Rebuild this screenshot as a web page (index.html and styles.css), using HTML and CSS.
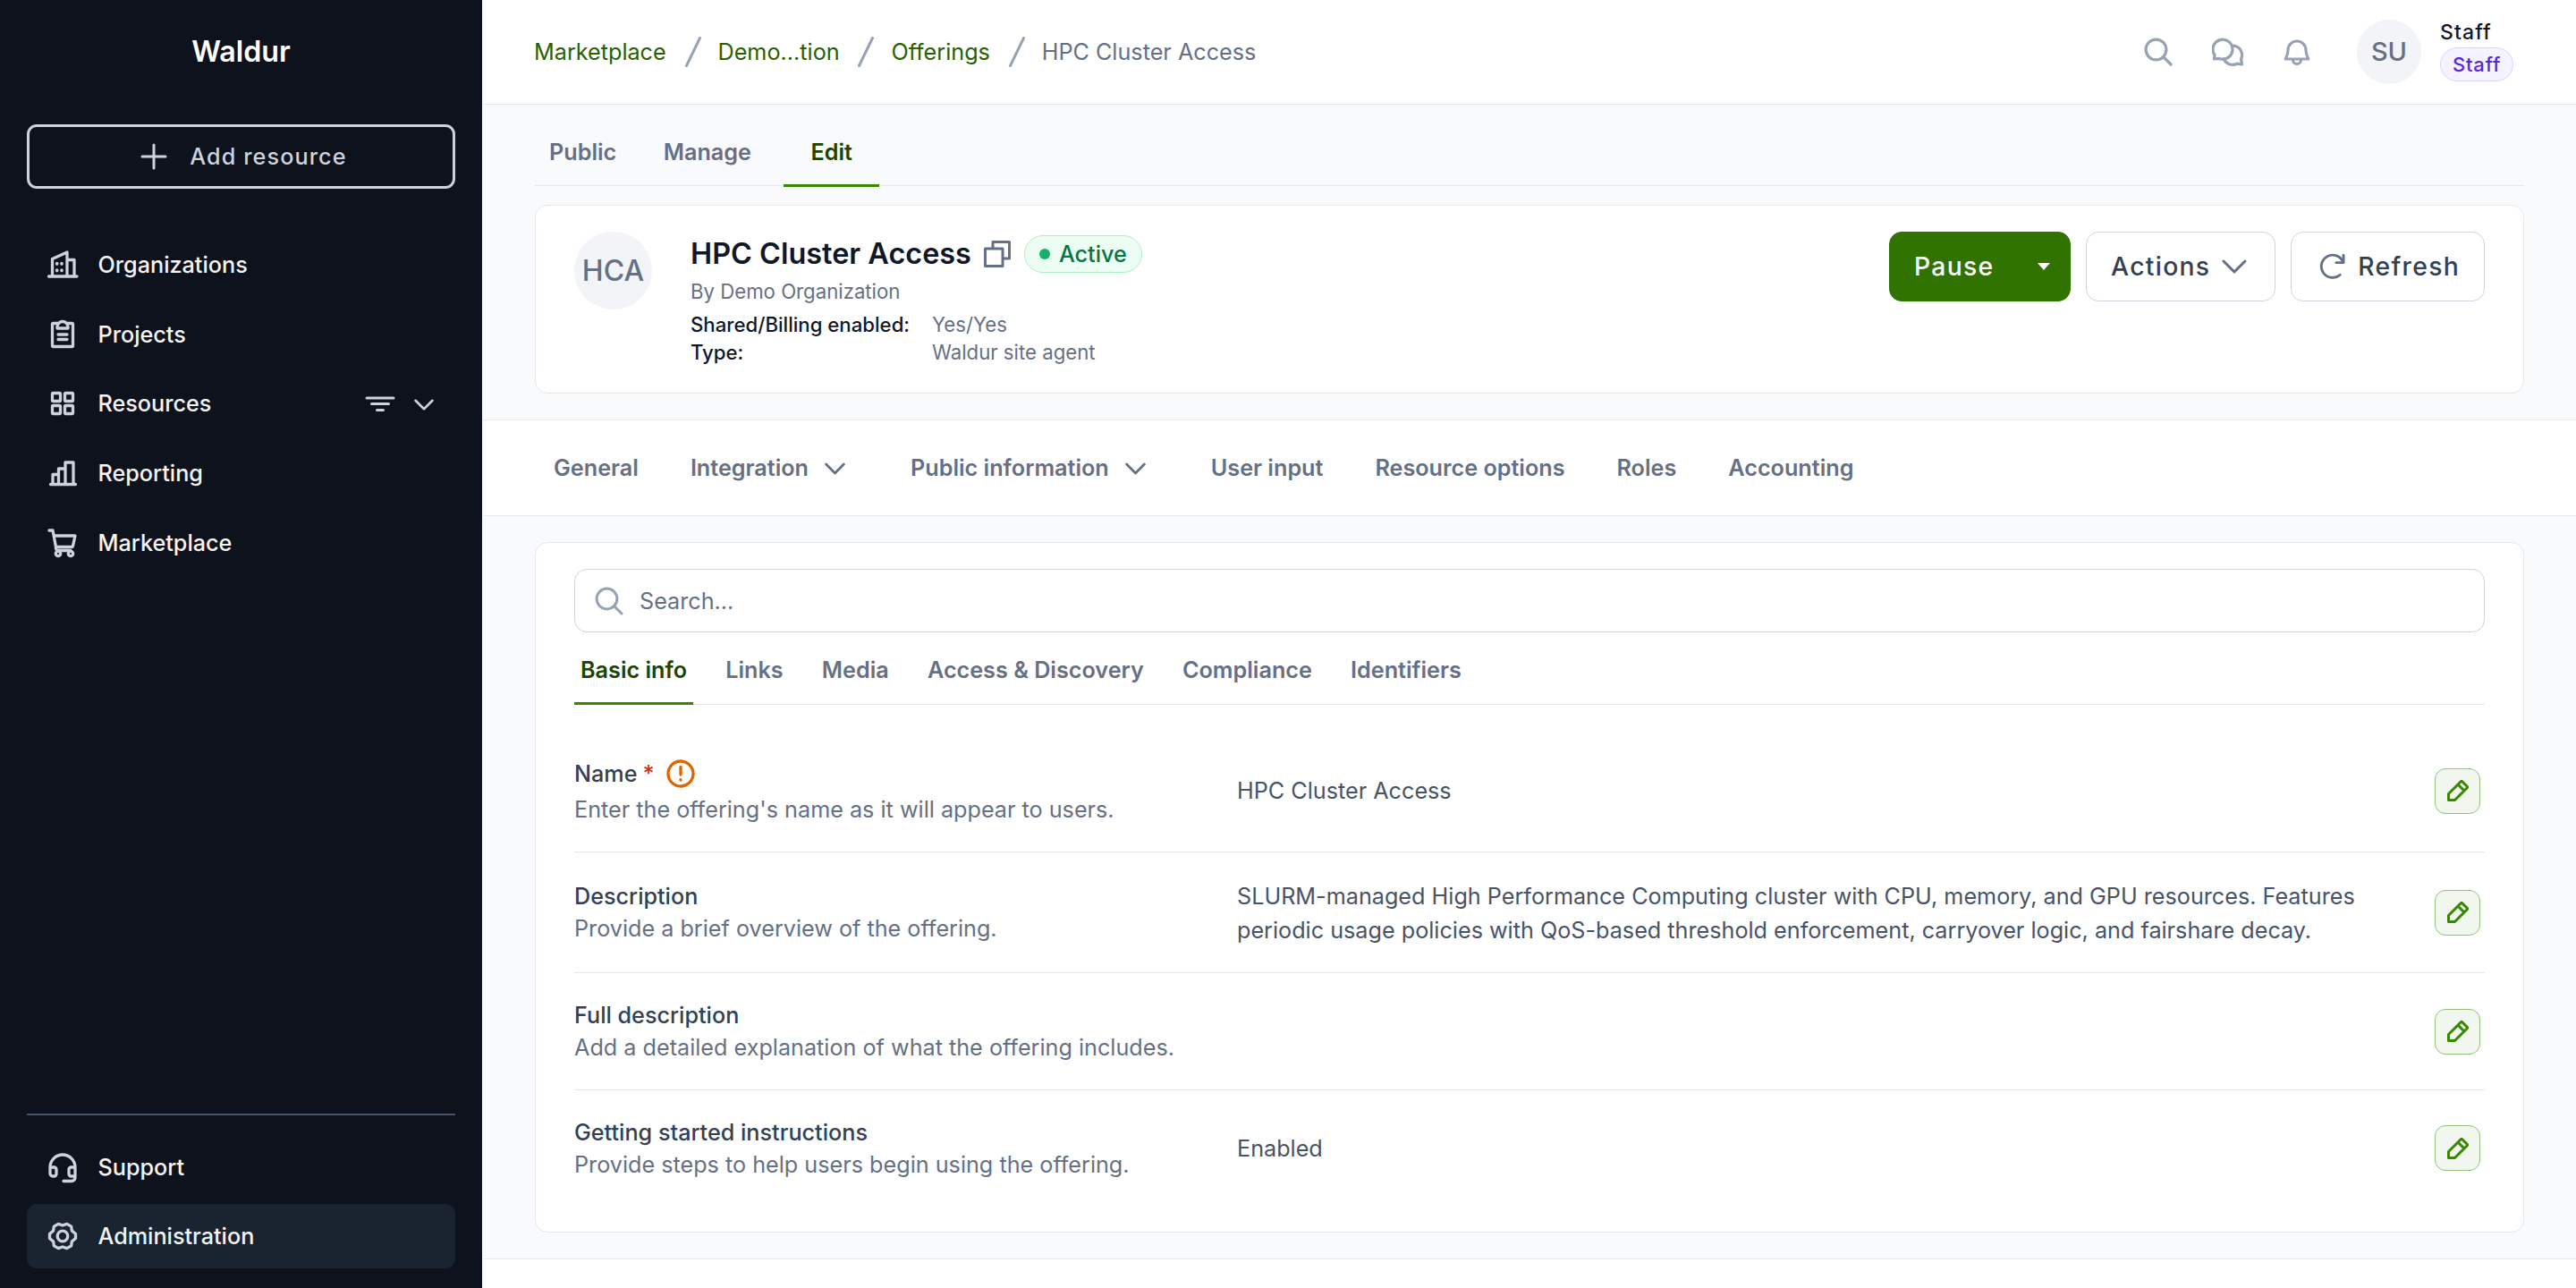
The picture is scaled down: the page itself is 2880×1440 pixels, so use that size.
FILE: index.html
```html
<!DOCTYPE html>
<html lang="en">
<head>
    <meta charset="UTF-8">
    <meta name="viewport" content="width=device-width, initial-scale=1.0">
    <title>HPC Cluster Access | Waldur</title>
    <link rel="stylesheet" href="styles.css">
</head>
<body>
    <!-- shared icons -->
    <svg class="sprite">
        <symbol id="chevron" viewBox="0 0 28 16"><path d="M2 2l12 12L26 2"/></symbol>
        <symbol id="search" viewBox="0 0 32 32"><circle cx="13.5" cy="13.5" r="11.4"/><path d="M21.700 21.700l8.300 8.300"/></symbol>
        <symbol id="pencil" viewBox="0 0 26 26"><path d="M2.5 16.5v7h7L23.3 9.7a1 1 0 0 0 0-1.4l-5.6-5.6a1 1 0 0 0-1.4 0zM13 6l7 7"/></symbol>
    </svg>

    <div class="app">
        <aside class="sidebar">
            <div class="logo">Waldur</div>
            <button class="add-resource">
                <svg width="30" height="30" viewBox="0 0 30 30"><path d="M2 15h26M15 2v26"/></svg>
                <span>Add resource</span>
            </button>
            <nav class="side-nav">
                <a class="side-item">
                    <svg viewBox="0 0 36 36"><path d="M2.500 31h31.500M6.500 31V11.500L23 4v27M23 12.500h8V31"/><path class="dots" d="M11.700 16.500v.6M17 16.500v.6M11.700 24v.6M17 24v.6"/></svg>
                    <span>Organizations</span>
                </a>
                <a class="side-item">
                    <svg viewBox="0 0 36 36"><path d="M12.500 5.500H7.500a1 1 0 0 0-1 1v24a1 1 0 0 0 1 1h21a1 1 0 0 0 1-1v-24a1 1 0 0 0-1-1h-5M12 11V9.500a6 6 0 0 1 12 0V11zM13 18h10M13 23.500h10"/></svg>
                    <span>Projects</span>
                </a>
                <a class="side-item">
                    <svg viewBox="0 0 36 36"><rect x="6.500" y="6.500" width="9" height="9" rx="1"/><rect x="20.500" y="6.500" width="9" height="9" rx="1"/><rect x="6.500" y="20.500" width="9" height="9" rx="1"/><rect x="20.500" y="20.500" width="9" height="9" rx="1"/></svg>
                    <span>Resources</span>
                    <span class="side-tools">
                        <svg class="filter" viewBox="0 0 34 18"><path d="M2 2h30M7.500 8.500h19M13.500 15.500h7"/></svg>
                        <svg class="chev"><use href="#chevron"/></svg>
                    </span>
                </a>
                <a class="side-item">
                    <svg viewBox="0 0 36 36"><path d="M4.500 30.500h28M7 30V19.500h6.500M13.500 30V13h7.500M21 30V6h9v24"/></svg>
                    <span>Reporting</span>
                </a>
                <a class="side-item">
                    <svg viewBox="0 0 36 36"><path d="M3 4h4l3.500 18.500h17.500a1.500 1.500 0 0 0 1.500-1.200L32 10H8.300M10.500 22.500a3 3 0 0 0 2.500 4h14"/><circle cx="13" cy="30" r="2.700"/><circle cx="27" cy="30" r="2.700"/></svg>
                    <span>Marketplace</span>
                </a>
            </nav>
            <nav class="side-bottom">
                <a class="side-item">
                    <svg viewBox="0 0 36 36"><path d="M32 18h-4.500a2.500 2.500 0 0 0-2.500 2.500v5a2.500 2.500 0 0 0 2.500 2.500H32zM32 18A14 14 0 0 0 4 18h4.500a2.500 2.500 0 0 1 2.500 2.500v5A2.500 2.500 0 0 1 8.500 28H7a3 3 0 0 1-3-3v-7M32 26v3.500a4 4 0 0 1-4 4h-9"/></svg>
                    <span>Support</span>
                </a>
                <a class="side-item current">
                    <svg viewBox="0 0 36 36"><path d="M32.500 15.500v5L28.400 24l-.8 4.900-4.800 2.700L18 30l-4.800 1.600-4.800-2.700L7.600 24l-4.100-3.500v-5L7.600 12l.8-4.900 4.800-2.700L18 6l4.800-1.600 4.800 2.700.8 4.900z"/><circle cx="18" cy="18" r="5.800"/></svg>
                    <span>Administration</span>
                </a>
            </nav>
        </aside>

        <main class="main">
            <header class="header">
                <div class="breadcrumb">
                    <a>Marketplace</a>
                    <svg class="slash" viewBox="0 0 18 34"><path d="M16.500 1.500l-15 31"/></svg>
                    <a>Demo...tion</a>
                    <svg class="slash" viewBox="0 0 18 34"><path d="M16.500 1.500l-15 31"/></svg>
                    <a>Offerings</a>
                    <svg class="slash" viewBox="0 0 18 34"><path d="M16.500 1.500l-15 31"/></svg>
                    <span>HPC Cluster Access</span>
                </div>
                <div class="header-tools">
                    <svg width="32" height="32"><use href="#search"/></svg>
                    <svg width="36" height="32" viewBox="0 0 36 32"><path d="M3 19.500A11 11 0 1 1 8 23.400L2.500 24zM24.500 9.200A10.500 10.500 0 0 1 32.600 24l.9 6-5.500-.8a11 11 0 0 1-15-5.500"/></svg>
                    <svg width="30" height="32" viewBox="0 0 30 32"><path d="M5 14a10 10 0 0 1 20 0c0 4 1.200 7 2.800 10H2.200C3.800 21 5 18 5 14zM10.500 25a4.500 4.500 0 0 0 9 0"/></svg>
                </div>
                <div class="avatar user-avatar">SU</div>
                <div class="user">
                    <span class="user-name">Staff</span>
                    <span class="user-role">Staff</span>
                </div>
            </header>

            <section class="hero">
                <div class="tabs">
                    <a class="tab">Public</a>
                    <a class="tab">Manage</a>
                    <a class="tab active">Edit</a>
                </div>
                <div class="offering card">
                    <div class="avatar">HCA</div>
                    <div class="offering-info">
                        <div class="title-row">
                            <h1>HPC Cluster Access</h1>
                            <svg class="copy" viewBox="0 0 30 30"><path d="M10 9V1.500h18.500V20H21M1.500 9H21v19.500H1.500z"/></svg>
                            <span class="badge"><i></i>Active</span>
                        </div>
                        <div class="by">By Demo Organization</div>
                        <dl class="meta">
                            <dt>Shared/Billing enabled:</dt><dd>Yes/Yes</dd>
                            <dt>Type:</dt><dd>Waldur site agent</dd>
                        </dl>
                    </div>
                    <div class="actions">
                        <button class="btn btn-pause">Pause<i class="caret"></i></button>
                        <button class="btn btn-actions">Actions <svg width="28" height="16"><use href="#chevron"/></svg></button>
                        <button class="btn btn-refresh"><svg width="31" height="31" viewBox="0 0 32 32"><path d="M30 2.500V11h-8.500M29.500 10.500A13 13 0 1 0 26 25"/></svg> Refresh</button>
                    </div>
                </div>
            </section>

            <nav class="menu">
                <a>General</a>
                <a>Integration <svg><use href="#chevron"/></svg></a>
                <a>Public information <svg><use href="#chevron"/></svg></a>
                <a>User input</a>
                <a>Resource options</a>
                <a>Roles</a>
                <a>Accounting</a>
            </nav>

            <section class="content">
                <div class="card settings">
                    <div class="search">
                        <svg width="32" height="32"><use href="#search"/></svg>
                        <span>Search...</span>
                    </div>
                    <div class="subtabs">
                        <a class="active">Basic info</a>
                        <a>Links</a>
                        <a>Media</a>
                        <a>Access &amp; Discovery</a>
                        <a>Compliance</a>
                        <a>Identifiers</a>
                    </div>
                    <div class="rows">
                        <div class="row row-name">
                            <div class="field">
                                <div class="label">Name <b>*</b>
                                    <svg class="alert" viewBox="0 0 32 32"><circle cx="16" cy="16" r="14"/><path d="M16 8.500v8.500M16 22.700v.3"/></svg>
                                </div>
                                <div class="hint">Enter the offering's name as it will appear to users.</div>
                            </div>
                            <div class="value">HPC Cluster Access</div>
                            <button class="edit"><svg><use href="#pencil"/></svg></button>
                        </div>
                        <div class="row row-desc">
                            <div class="field">
                                <div class="label">Description</div>
                                <div class="hint">Provide a brief overview of the offering.</div>
                            </div>
                            <div class="value">SLURM-managed High Performance Computing cluster with CPU, memory, and GPU resources. Features<br>periodic usage policies with QoS-based threshold enforcement, carryover logic, and fairshare decay.</div>
                            <button class="edit"><svg><use href="#pencil"/></svg></button>
                        </div>
                        <div class="row">
                            <div class="field">
                                <div class="label">Full description</div>
                                <div class="hint">Add a detailed explanation of what the offering includes.</div>
                            </div>
                            <div class="value"></div>
                            <button class="edit"><svg><use href="#pencil"/></svg></button>
                        </div>
                        <div class="row">
                            <div class="field">
                                <div class="label">Getting started instructions</div>
                                <div class="hint">Provide steps to help users begin using the offering.</div>
                            </div>
                            <div class="value">Enabled</div>
                            <button class="edit"><svg><use href="#pencil"/></svg></button>
                        </div>
                    </div>
                </div>
            </section>
            <footer class="footer"></footer>
        </main>
    </div>
</body>
</html>
```

FILE: styles.css
```css
* {
    box-sizing: border-box;
}
body {
    margin: 0;
    font-family: Inter, "Liberation Sans", sans-serif;
    font-optical-sizing: none;
    font-size: 25.2px;
    line-height: 36px;
    color: #101828;
    background: #f9fafc;
}
button {
    font: inherit;
    cursor: pointer;
}
svg {
    display: block;
    flex: none;
    fill: none;
    stroke: currentColor;
    stroke-width: 3;
    stroke-linecap: round;
    stroke-linejoin: round;
}
.sprite {
    position: absolute;
    width: 0;
    height: 0;
}
.app {
    display: flex;
    width: 2880px;
    height: 1440px;
    overflow: hidden;
}

/* sidebar */
.sidebar {
    display: flex;
    flex-direction: column;
    flex: none;
    width: 540px;
    padding: 0 30px 22px 30px;
    background: #0d121c;
    border-right: 1px solid #fff;
}
.logo {
    height: 139px;
    padding-top: 40px;
    font-size: 32.2px;
    font-weight: 600;
    text-align: center;
    color: #fff;
}
.add-resource {
    display: flex;
    align-items: center;
    justify-content: center;
    gap: 25px;
    height: 72px;
    padding: 0 0 0 6px;
    border: 3px solid #ced2dc;
    border-radius: 11px;
    background: none;
    color: #ced2dc;
    font-weight: 500;
    letter-spacing: 1.1px;
}
.side-nav {
    display: flex;
    flex-direction: column;
    gap: 5.7px;
    margin-top: 49px;
}
.side-item {
    display: flex;
    align-items: center;
    gap: 21.5px;
    height: 72px;
    padding: 0 22px;
    border-radius: 11px;
    color: #f5f5f6;
    font-weight: 500;
}
.side-item svg {
    width: 36px;
    height: 36px;
    color: #ced2dc;
    stroke-width: 3.3;
}
.side-item .dots {
    stroke-width: 3.6;
}
.side-tools {
    display: flex;
    align-items: center;
    gap: 21px;
    margin-left: auto;
    padding-top: 2px;
    padding-right: 2px;
}
.side-item .filter {
    width: 34px;
    height: 18px;
    stroke-width: 3;
}
.side-item .chev {
    width: 22px;
    height: 13px;
}
.side-bottom {
    display: flex;
    flex-direction: column;
    gap: 4.7px;
    margin-top: auto;
    padding-top: 22.3px;
    border-top: 2px solid #475467;
}
.side-item.current {
    background: #1a2330;
}

/* header */
.main {
    display: flex;
    flex-direction: column;
    flex: 1;
}
.header {
    display: flex;
    align-items: center;
    height: 117px;
    padding: 0 70px 0 57px;
    background: #fff;
    border-bottom: 1px solid #e4e7ec;
}
.breadcrumb {
    display: flex;
    align-items: center;
    color: #667085;
}
.breadcrumb a {
    color: #286100;
}
.slash {
    width: 18px;
    height: 34px;
    margin: 0 19px 0 20.8px;
    color: #98a2b3;
}
.header-tools {
    display: flex;
    align-items: center;
    gap: 44px;
    margin-left: auto;
    margin-right: 52px;
    color: #98a2b3;
}
.header-tools svg {
    stroke-width: 3.2;
}
.avatar {
    display: flex;
    align-items: center;
    justify-content: center;
    flex: none;
    width: 87px;
    height: 87px;
    border-radius: 50%;
    background: #f2f4f7;
    color: #667085;
    font-size: 32px;
    font-weight: 500;
}
.user-avatar {
    width: 72px;
    height: 72px;
    font-size: 29px;
}
.user {
    display: flex;
    flex-direction: column;
    align-items: flex-start;
    width: 82px;
    margin-left: 21px;
    padding-bottom: 7px;
    font-size: 23px;
    font-weight: 500;
    line-height: 34px;
    letter-spacing: 1.1px;
}
.user-role {
    width: 82px;
    border: 1px solid #d9d6fe;
    border-radius: 20px;
    background: #f4f3ff;
    color: #5925dc;
    font-size: 22px;
    line-height: 36px;
    letter-spacing: .8px;
    text-align: center;
}

/* offering card */
.hero {
    height: 352px;
    padding: 0 58px 0 58px;
}
.tabs {
    display: flex;
    height: 91px;
    border-bottom: 1px solid #e4e7ec;
}
.tab {
    height: 92px;
    padding: 35px 16px 0;
    margin-right: 20.5px;
    color: #667085;
    font-weight: 600;
}
.tab.active {
    padding: 35px 30.5px 0 30px;
    border-bottom: 3px solid #388700;
    color: #1c4400;
}
.card {
    border: 1px solid #e4e7ec;
    border-radius: 14px;
    background: #fff;
}
.offering {
    display: flex;
    height: 211px;
    margin-top: 21px;
    padding: 29px 43px;
}
.offering-info {
    margin-left: 43px;
}
.title-row {
    display: flex;
    align-items: center;
    height: 50px;
}
h1 {
    margin: 0;
    font-size: 32.4px;
    font-weight: 600;
}
.copy {
    width: 30px;
    height: 30px;
    margin: 0 15px 0 14px;
    color: #667085;
}
.badge {
    display: flex;
    align-items: center;
    height: 42px;
    padding: 0 16px 0 16px;
    border: 1px solid #abefc6;
    border-radius: 21px;
    background: #ecfdf3;
    color: #067647;
    font-weight: 500;
}
.badge i {
    width: 12px;
    height: 12px;
    margin-right: 10px;
    border-radius: 50%;
    background: #17b26a;
}
.by {
    margin-top: -1px;
    color: #667085;
    font-size: 22.2px;
}
.meta {
    display: grid;
    grid-template-columns: 270px auto;
    margin: 3px 0 0;
    font-size: 22.2px;
    line-height: 31px;
}
.meta dt {
    font-weight: 500;
}
.meta dd {
    margin: 0;
    color: #667085;
}
.actions {
    display: flex;
    gap: 17px;
    margin-left: auto;
}
.btn {
    display: flex;
    align-items: center;
    height: 78px;
    padding: 0 27px;
    border: 1px solid #d0d5dd;
    border-radius: 14px;
    background: #fff;
    color: #344054;
    font-size: 28.3px;
    font-weight: 500;
    letter-spacing: 1.3px;
}
.btn svg {
    color: #667085;
}
.btn-pause {
    justify-content: space-between;
    width: 203px;
    padding: 0 22px 0 27px;
    background: #307300;
    border-color: #307300;
    color: #fff;
}
.caret {
    border: 7px solid transparent;
    border-top: 8px solid #fff;
    border-bottom: 0;
}
.btn-actions {
    justify-content: space-between;
    width: 212px;
    padding-right: 31px;
}
.btn-refresh {
    justify-content: space-between;
    width: 217px;
    padding-left: 29px;
}

/* menu */
.menu {
    display: flex;
    align-items: center;
    gap: 58px;
    height: 108px;
    padding-left: 79px;
    background: #fff;
    border: 1px solid #e4e7ec;
    border-width: 1px 0;
    color: #667085;
    font-weight: 600;
}
.menu a {
    display: flex;
    align-items: center;
}
.menu svg {
    width: 23px;
    height: 14px;
    margin: 2px 15px 0 18px;
    stroke-width: 3.4;
}

/* settings */
.content {
    height: 830px;
    padding: 29px 58px 0 58px;
}
.settings {
    height: 772px;
    padding: 29px 43px;
}
.search {
    display: flex;
    align-items: center;
    gap: 18px;
    height: 71px;
    padding-left: 22px;
    border: 1px solid #d0d5dd;
    border-radius: 14px;
    color: #667085;
}
.search svg {
    color: #98a2b3;
}
.subtabs {
    display: flex;
    gap: 29.2px;
    height: 81px;
    border-bottom: 1px solid #e4e7ec;
    color: #667085;
    font-weight: 600;
}
.subtabs a {
    height: 81px;
    padding: 24px 7px 0;
}
.subtabs .active {
    border-bottom: 3px solid #388700;
    color: #1c4400;
}
.rows {
    padding-top: 28px;
}
.row {
    display: flex;
    align-items: center;
    height: 131px;
    padding-right: 5px;
    border-bottom: 1px solid #e4e7ec;
}
.row:last-child {
    height: 129px;
    border-bottom: none;
}
.row-name {
    height: 137px;
}
.row-desc {
    height: 135px;
}
.field {
    width: 741px;
    flex: none;
}
.label {
    display: flex;
    align-items: center;
    gap: 6px;
    color: #344054;
    font-weight: 500;
}
.label b {
    color: #d92d20;
    font-weight: 500;
}
.row-name .field {
    padding-bottom: 2px;
}
.row-name .label {
    height: 42px;
    margin-bottom: 1px;
}
.alert {
    width: 32px;
    height: 32px;
    margin-left: 7px;
    color: #dc6803;
    stroke-width: 3.3;
}
.hint {
    color: #667085;
}
.value {
    flex: 1;
    color: #475467;
    line-height: 38px;
    white-space: nowrap;
}
.row-desc .value {
    padding-top: 1px;
}
.edit {
    display: flex;
    align-items: center;
    justify-content: center;
    width: 51px;
    height: 51px;
    padding: 0;
    border: 1px solid #93c178;
    border-radius: 12px;
    background: #f1f6ee;
    color: #388700;
}
.edit svg {
    width: 26px;
    height: 26px;
    stroke-width: 3;
}
.footer {
    flex: 1;
    background: #fff;
    border-top: 1px solid #e4e7ec;
}
```
